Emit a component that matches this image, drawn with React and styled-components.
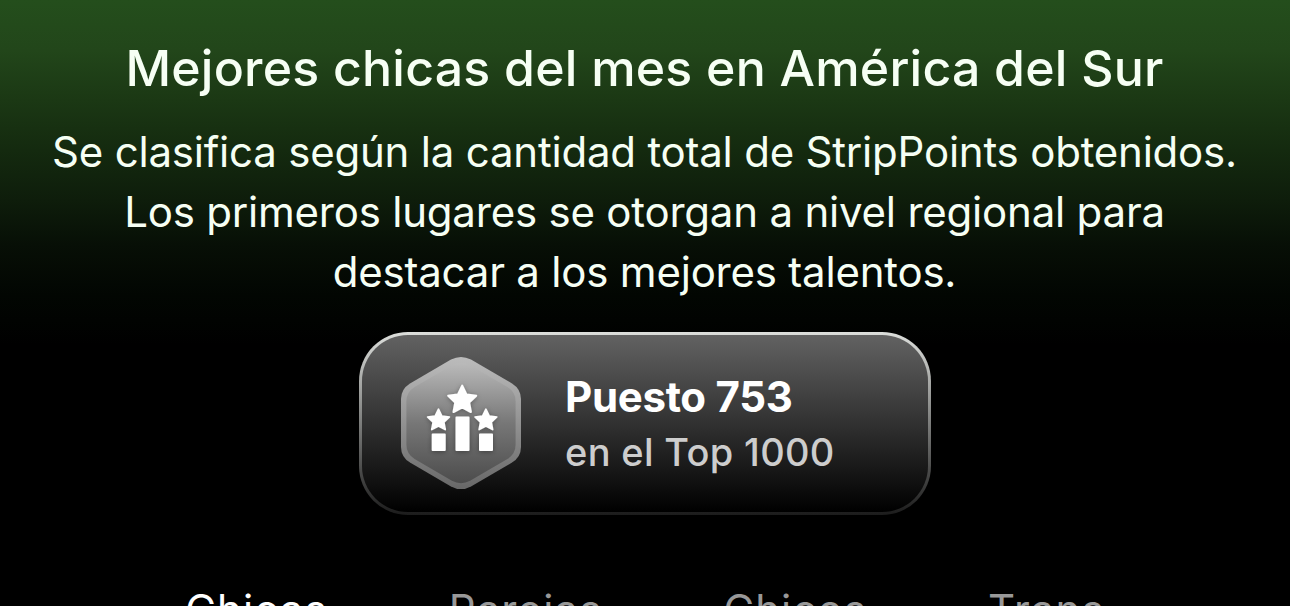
import React from "react";
import styled, { createGlobalStyle } from "styled-components";

const GlobalStyle = createGlobalStyle`
  body {
    margin: 0;
    background: #000;
    overflow: hidden;
  }
`;

const Page = styled.main`
  box-sizing: border-box;
  display: flex;
  flex-direction: column;
  align-items: center;
  height: 606px;
  padding-top: 38px;
  overflow: hidden;
  font-family: "Inter", sans-serif;
  color: #f6fff4;
  background: linear-gradient(
    to bottom,
    #244e1c 0px,
    #22461a 50px,
    #1b3814 100px,
    #142a0f 150px,
    #0e1d0b 200px,
    #070f06 245px,
    #020602 295px,
    #000 345px
  );
`;

const Title = styled.h1`
  margin: 0 1px 24px 0;
  font-size: 50px;
  font-weight: 500;
  line-height: 60px;
  letter-spacing: 0.22px;
  white-space: nowrap;
`;

const Description = styled.p`
  margin: 0 1px 30px 0;
  font-size: 42px;
  line-height: 60px;
  letter-spacing: -0.21px;
  text-align: center;
  white-space: nowrap;
`;

const RankCard = styled.section`
  box-sizing: border-box;
  display: flex;
  flex-shrink: 0;
  align-items: center;
  width: 572px;
  height: 183px;
  padding-left: 38px;
  border: 3px solid transparent;
  border-radius: 49px;
  background: linear-gradient(#626262, #000) padding-box,
    linear-gradient(#dcdedb, #1c1c1c) border-box;
`;

const Badge = styled.svg`
  flex-shrink: 0;
  width: 122px;
  height: 134px;
  margin-bottom: 1px;
`;

const RankText = styled.div`
  display: flex;
  flex-direction: column;
  margin-left: 43px;
`;

const RankName = styled.span`
  font-size: 42px;
  font-weight: 700;
  line-height: 56px;
  letter-spacing: -0.3px;
  color: #fff;
`;

const RankScope = styled.span`
  font-size: 38px;
  font-weight: 500;
  line-height: 54px;
  letter-spacing: 0.33px;
  color: #cdcdcd;
`;

const Tabs = styled.nav`
  display: flex;
  flex-shrink: 0;
  gap: 121px;
  margin-top: 65px;
`;

const Tab = styled.span`
  font-size: 42px;
  line-height: 60px;
  letter-spacing: 1.1px;
  color: ${(props) => (props.$active ? "#fff" : "#989898")};
`;

const tabs = ["Chicas", "Parejas", "Chicos", "Trans"];

const STAR =
  "M0 -14 L4.3 -5 L14 -3.9 L6.9 2.8 L8.7 12.4 L0 7.8 L-8.7 12.4 L-6.9 2.8 L-14 -3.9 L-4.3 -5Z";
const HEXAGON =
  "M51 3.6Q61 -1.8 71 3.6L112 27.4Q121 33 121 43V91Q121 101 112 106.6L71 130.4Q61 135.8 51 130.4L10 106.6Q1 101 1 91V43Q1 33 10 27.4Z";

const RankBadge = () => (
  <Badge viewBox="0 0 122 134">
    <defs>
      <linearGradient id="rim" x1="0" y1="0" x2="0" y2="1">
        <stop offset="0" stopColor="#bcbcbc" />
        <stop offset="0.5" stopColor="#929292" />
        <stop offset="1" stopColor="#686868" />
      </linearGradient>
      <linearGradient id="face" x1="0" y1="0" x2="0" y2="1">
        <stop offset="0" stopColor="#bababa" />
        <stop offset="0.5" stopColor="#777" />
        <stop offset="1" stopColor="#4c4c4c" />
      </linearGradient>
      <filter id="shade" x="-20%" y="-20%" width="140%" height="140%">
        <feDropShadow dx="0" dy="1" stdDeviation="2.5" floodOpacity="0.35" />
      </filter>
    </defs>
    <path d={HEXAGON} fill="url(#rim)" />
    <path
      d={HEXAGON}
      fill="url(#face)"
      transform="translate(61 67) scale(.91) translate(-61 -67)"
    />
    <g
      fill="#fff"
      stroke="#fff"
      strokeWidth="2"
      strokeLinejoin="round"
      filter="url(#shade)"
    >
      <path d={STAR} transform="translate(62.2 43.6)" />
      <path d={STAR} transform="translate(38.5 64) scale(.78)" />
      <path d={STAR} transform="translate(85.9 64) scale(.78)" />
      <rect x="32.7" y="78.6" width="12" height="15.3" />
      <rect x="56.5" y="61.6" width="12" height="32.3" />
      <rect x="80" y="78.6" width="12" height="15.3" />
    </g>
  </Badge>
);

const App = () => {
  return (
    <>
      <GlobalStyle />
      <Page>
        <Title>Mejores chicas del mes en América del Sur</Title>
        <Description>
          Se clasifica según la cantidad total de StripPoints obtenidos.
          <br />
          Los primeros lugares se otorgan a nivel regional para
          <br />
          destacar a los mejores talentos.
        </Description>
        <RankCard>
          <RankBadge />
          <RankText>
            <RankName>Puesto 753</RankName>
            <RankScope>en el Top 1000</RankScope>
          </RankText>
        </RankCard>
        <Tabs>
          {tabs.map((name, index) => (
            <Tab key={name} $active={index === 0}>
              {name}
            </Tab>
          ))}
        </Tabs>
      </Page>
    </>
  );
};

export default App;
